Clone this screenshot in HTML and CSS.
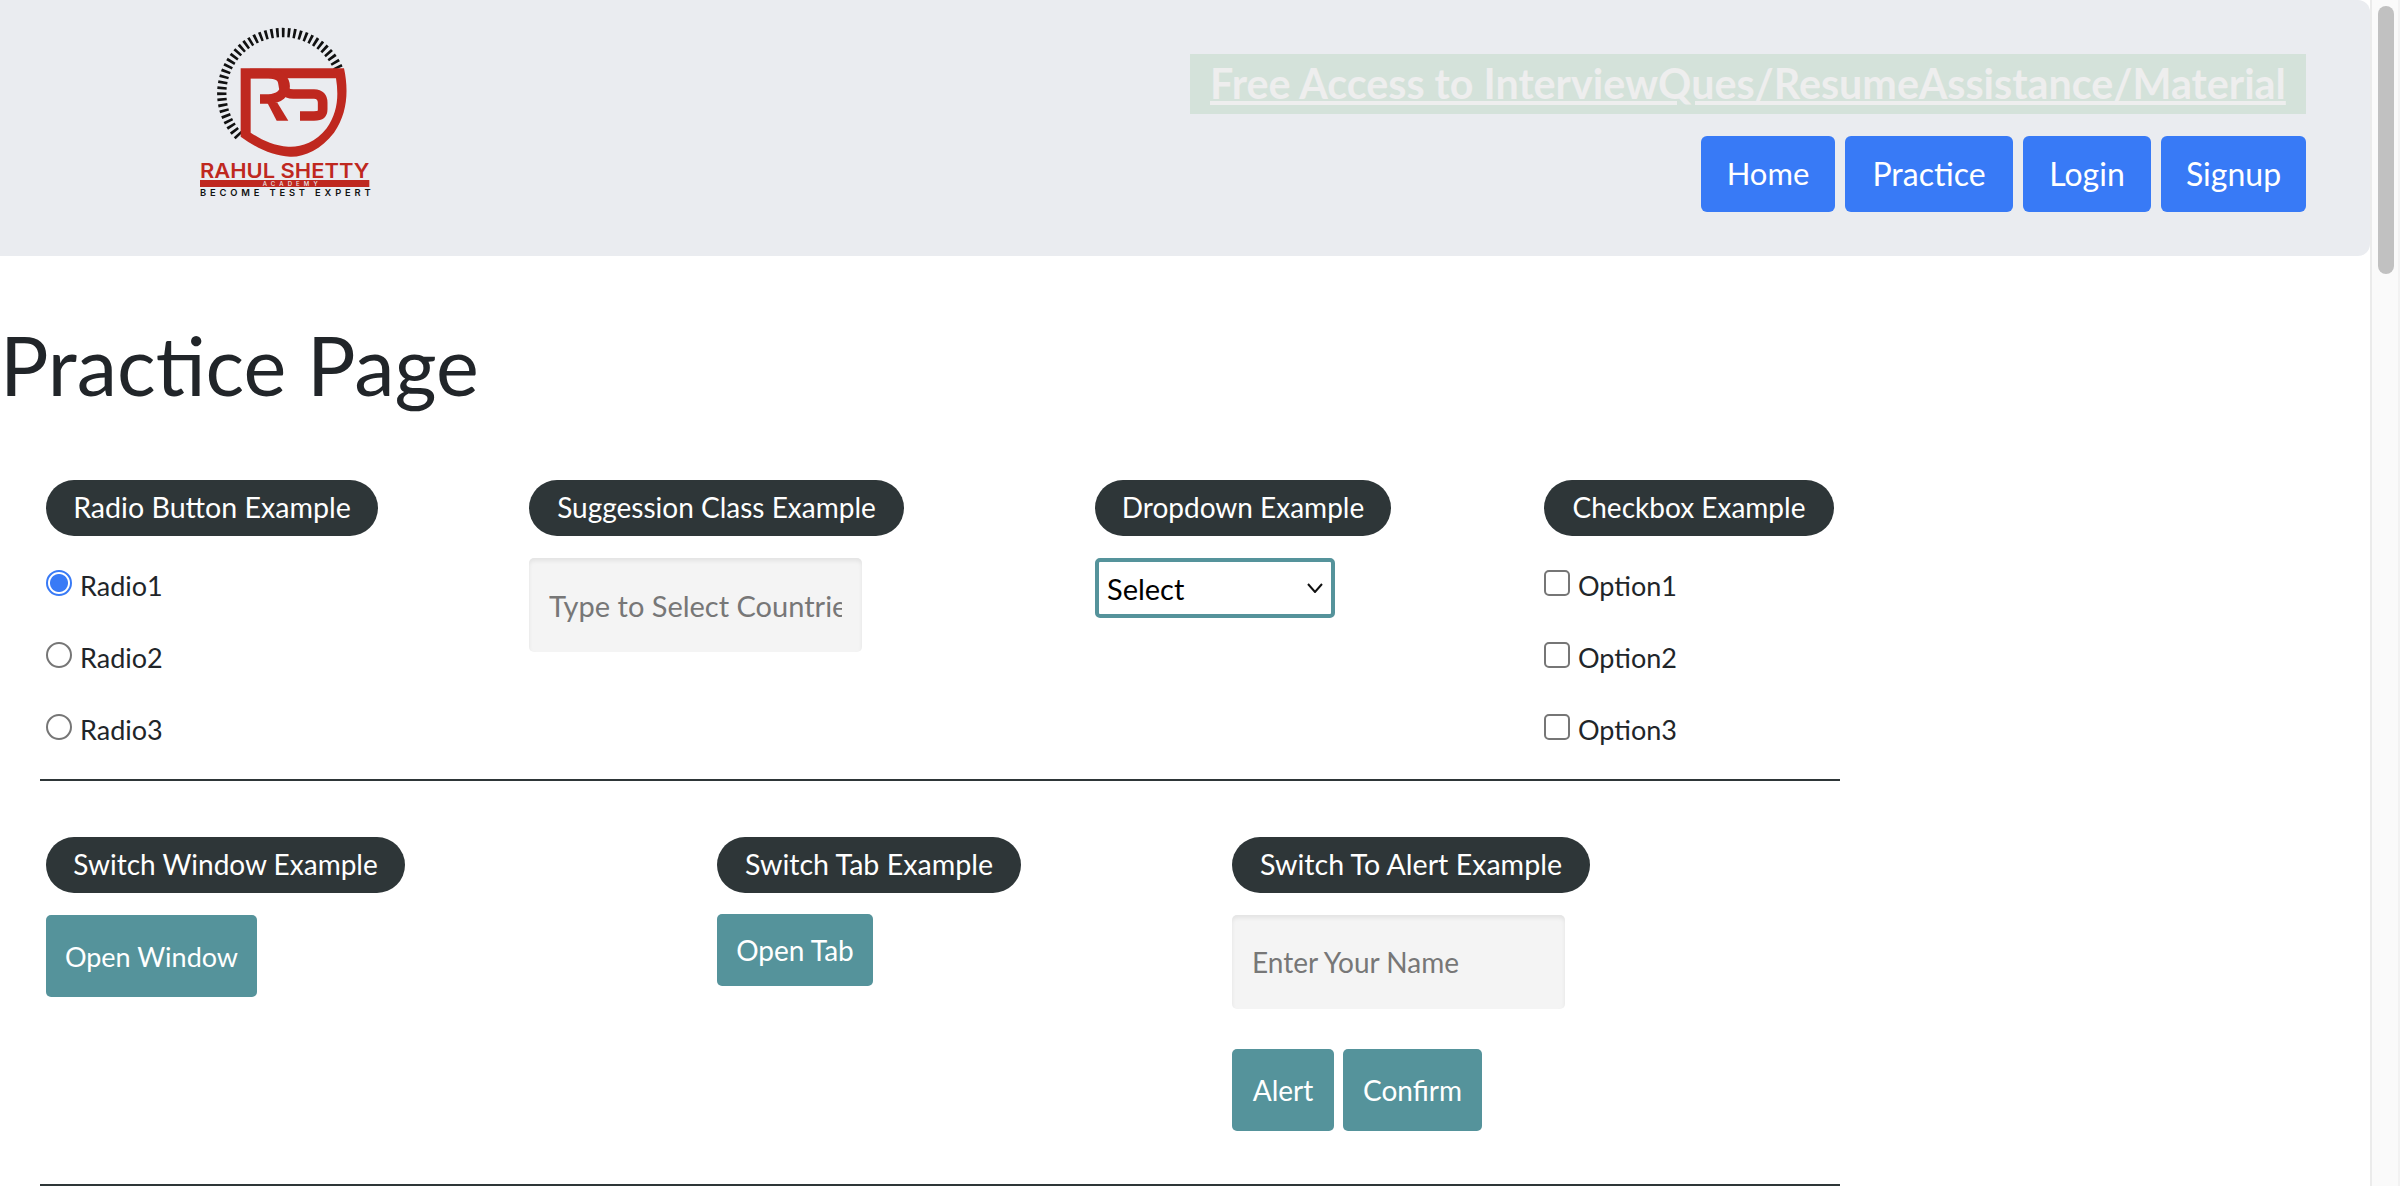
FILE: index.html
```html
<!DOCTYPE html>
<html lang="en">
<head>
<meta charset="utf-8">
<title>Practice Page</title>
<link rel="stylesheet" href="styles.css">
</head>
<body>
<div class="viewport">
  <main class="page">
    <header class="site-header">
      <svg class="logo" viewBox="0 0 720 660" role="img" aria-label="Rahul Shetty Academy logo">
        <path class="logo-ticks" d="M237 408A183 183 0 1 1 535 205"/>
        <path class="logo-red" d="M242 205H552C566 270 563 340 522 398C482 450 430 472 390 470C340 468 290 445 242 410Z"/>
        <path class="logo-bg" d="M272 235H528C537 290 532 340 500 385C465 430 420 442 385 440C340 438 305 420 272 398Z"/>
        <path class="logo-stroke" d="M270 221H325C392 221 392 297 325 297H300"/>
        <path class="logo-red" d="M322 308H352L385 362H350Z"/>
        <path class="logo-stroke" d="M352 224C385 238 352 282 400 282H462C480 282 488 292 488 308V328C488 345 478 348 462 348H420"/>
        <text class="logo-name" x="120" y="533" textLength="508" lengthAdjust="spacingAndGlyphs">RAHUL SHETTY</text>
        <rect class="logo-band" x="120" y="540" width="508" height="21"/>
        <text class="logo-academy" x="308" y="558" textLength="165" lengthAdjust="spacing">ACADEMY</text>
        <text class="logo-tag" x="120" y="588" textLength="512" lengthAdjust="spacing">BECOME TEST EXPERT</text>
      </svg>
      <div class="header-right">
        <div class="banner"><a href="#">Free Access to InterviewQues/ResumeAssistance/Material</a></div>
        <nav class="nav">
          <a class="nav-btn nav-home" href="#">Home</a>
          <a class="nav-btn nav-practice" href="#">Practice</a>
          <a class="nav-btn nav-login" href="#">Login</a>
          <a class="nav-btn nav-signup" href="#">Signup</a>
        </nav>
      </div>
    </header>

    <h1 class="title">Practice Page</h1>

    <section class="row row-one">
      <div class="col">
        <div class="pill pill-radio">Radio Button Example</div>
        <label class="opt"><input type="radio" name="r" checked>Radio1</label>
        <label class="opt"><input type="radio" name="r">Radio2</label>
        <label class="opt"><input type="radio" name="r">Radio3</label>
      </div>
      <div class="col">
        <div class="pill pill-sugg">Suggession Class Example</div>
        <input class="field field-sugg" type="text" placeholder="Type to Select Countries">
      </div>
      <div class="col">
        <div class="pill pill-drop">Dropdown Example</div>
        <div class="select"><span>Select</span>
          <svg class="chev" viewBox="0 0 16 10"><path d="M1 1L8 9L15 1"/></svg>
        </div>
      </div>
      <div class="col">
        <div class="pill pill-check">Checkbox Example</div>
        <label class="opt"><input type="checkbox">Option1</label>
        <label class="opt"><input type="checkbox">Option2</label>
        <label class="opt"><input type="checkbox">Option3</label>
      </div>
    </section>
    <hr class="rule">

    <section class="row row-two">
      <div class="col">
        <div class="pill pill-window">Switch Window Example</div>
        <button class="btn btn-window">Open Window</button>
      </div>
      <div class="col">
        <div class="pill pill-tab">Switch Tab Example</div>
        <a class="btn btn-tab" href="#">Open Tab</a>
      </div>
      <div class="col">
        <div class="pill pill-alert">Switch To Alert Example</div>
        <input class="field" type="text" placeholder="Enter Your Name">
        <div class="btn-row">
          <button class="btn btn-alert">Alert</button>
          <button class="btn btn-confirm">Confirm</button>
        </div>
      </div>
    </section>
    <hr class="rule">
  </main>
  <aside class="scrollbar" aria-hidden="true"><div class="thumb"></div></aside>
</div>
</body>
</html>
```

FILE: styles.css
```css
* { box-sizing: border-box; }
html, body { margin: 0; padding: 0; background: #fff; }
body { font-family: "Lato", "Noto Sans", sans-serif; color: #212529; }
.viewport { display: flex; height: 1186px; overflow: hidden; }
.page { width: 2370px; flex: none; }

.scrollbar { width: 30px; flex: none; background: #fafafa; border-left: 2px solid #ebebeb; border-right: 2px solid #f2f2f2; padding: 6px 4px 0 6px; }
.thumb { width: 16px; height: 268px; border-radius: 8px; background: #c1c1c1; }

.site-header { height: 256px; background: #eaecf0; border-radius: 0 12px 12px 0; display: flex; justify-content: space-between; padding-right: 64px; }
.logo { width: 240px; height: 220px; margin-left: 160px; flex: none; }
.logo-ticks { fill: none; stroke: #111; stroke-width: 28; stroke-dasharray: 8 9; }
.logo-red { fill: #bf281f; }
.logo-bg { fill: #eaecf0; }
.logo-stroke { fill: none; stroke: #bf281f; stroke-width: 29; }
.logo-name { font: 600 62px "Inter", sans-serif; fill: #bf281f; }
.logo-band { fill: #bf281f; }
.logo-academy { font: 500 18px "Inter", sans-serif; fill: #eaecf0; }
.logo-tag { font: 600 28px "Inter", sans-serif; fill: #111; }

.header-right { display: flex; flex-direction: column; align-items: flex-end; padding-top: 54px; }
.banner { height: 60px; width: 1116px; background: #d4e2da; padding: 0 20px 3px; display: flex; align-items: center; white-space: nowrap; }
.banner a { color: #eeeeee; font-size: 41.25px; font-weight: 700; text-decoration: underline; text-decoration-thickness: 4px; }
.nav { display: flex; gap: 10px; margin-top: 22px; }
.nav-btn { height: 76px; background: #387af6; color: #fff; font-size: 32px; border-radius: 6px; padding-bottom: 2px; display: flex; align-items: center; justify-content: center; text-decoration: none; }
.nav-home { width: 134px; font-size: 31px; }
.nav-practice { width: 168px; }
.nav-login { width: 128px; }
.nav-signup { width: 145px; }

.title { margin: 62px 0 0; font-size: 81px; font-weight: 400; line-height: 94px; height: 94px; color: #212529; }

.row { display: grid; padding-left: 46px; }
.row-one { margin-top: 68px; grid-template-columns: 483px 566px 449px 1fr; height: 299px; }
.row-two { margin-top: 56px; grid-template-columns: 671px 515px 1fr; height: 347px; }
.col { display: flex; flex-direction: column; align-items: flex-start; }

.pill { height: 56px; background: #2e3638; color: #fff; font-size: 28px; border-radius: 28px; padding-bottom: 2px; display: flex; align-items: center; justify-content: center; white-space: nowrap; margin-bottom: 22px; }
.pill-radio { width: 332px; font-size: 28.6px; }
.pill-sugg { width: 375px; }
.pill-drop { width: 296px; }
.pill-check { width: 290px; }
.pill-window { width: 359px; }
.pill-tab { width: 304px; font-size: 28.6px; }
.pill-alert { width: 358px; font-size: 28.6px; }

.opt { display: flex; align-items: flex-start; height: 26px; margin-top: 12px; margin-bottom: 34px; font-size: 27px; line-height: 32px; color: #212529; white-space: nowrap; }
.opt input { appearance: none; width: 26px; height: 26px; margin: 0 8px 0 0; flex: none; background: #fff; border: 2px solid #767676; }
.opt input[type="radio"] { border-radius: 50%; }
.opt input[type="checkbox"] { border-radius: 5px; }
.opt input[type="radio"]:checked { border-color: #387af6; background: radial-gradient(circle, #387af6 0 8.5px, #fff 9.5px); }

.field { width: 333px; height: 94px; background: #f4f4f4; border: 0; border-radius: 5px; padding: 0 20px; font: 28px "Lato", sans-serif; box-shadow: inset 0 3px 4px rgba(0,0,0,.07); }
.field-sugg { font-size: 29px; }
.field::placeholder { color: #777; opacity: 1; }

.select { width: 240px; height: 60px; border: 4px solid #55939b; border-radius: 5px; display: flex; align-items: center; justify-content: space-between; padding: 0 8px 0 8px; font-size: 29px; color: #000; }
.chev { width: 16px; height: 10px; }
.chev path { fill: none; stroke: #111; stroke-width: 2; }

.btn { background: #55939b; color: #fff; border: 0; border-radius: 5px; font: 28px "Lato", sans-serif; display: flex; align-items: center; justify-content: center; text-decoration: none; padding: 0; }
.btn-window { width: 211px; height: 82px; font-size: 27px; }
.btn-tab { width: 156px; height: 72px; margin-top: -1px; }
.btn-row { display: flex; gap: 9px; margin-top: 40px; }
.btn-alert { width: 102px; height: 82px; }
.btn-confirm { width: 139px; height: 82px; }

.rule { margin: 0 0 0 40px; width: 1800px; height: 2px; border: 0; background: #2e3638; }
```
